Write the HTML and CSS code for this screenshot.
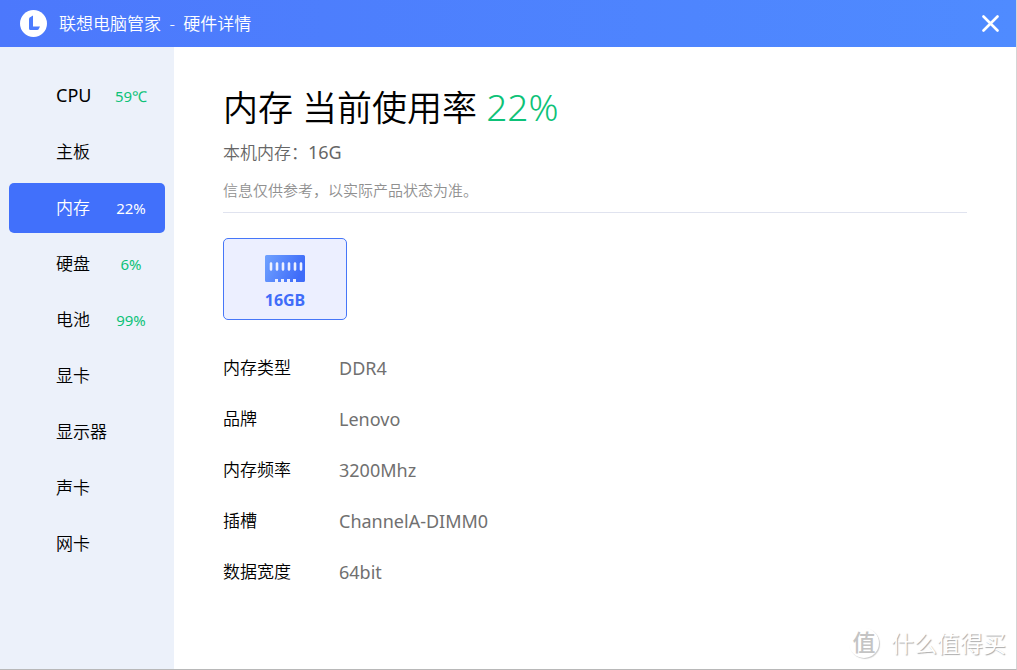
FILE: index.html
```html
<!DOCTYPE html>
<html lang="zh-CN">
<head>
<meta charset="utf-8">
<title>联想电脑管家 - 硬件详情</title>
<link rel="stylesheet" href="styles.css">
</head>
<body>
<div class="window">
  <header class="titlebar">
    <svg class="logo" viewBox="0 0 27 27" aria-hidden="true">
      <circle cx="13.5" cy="13.5" r="13.5" fill="#fff"/>
      <path d="M9 9Q9 7.500 10.500 7L13 5.500V16.500H20L19 18.500Q18.500 20 17 20H10.500Q9 20 9 18.500Z" fill="#4c7cff"/>
    </svg>
    <h1 class="app-title">联想电脑管家<span class="dash"> - </span>硬件详情</h1>
    <button class="close" type="button" aria-label="关闭">
      <svg viewBox="0 0 17 17" aria-hidden="true"><path d="M1.500 1.500L15.500 15.500M15.500 1.500L1.500 15.500" stroke="#fff" stroke-width="2.600" stroke-linecap="round"/></svg>
    </button>
  </header>
  <div class="body">
    <nav class="sidebar">
      <a class="item" href="#cpu"><span class="name"><span class="latin">CPU</span></span><span class="stat">59℃</span></a>
      <a class="item" href="#board"><span class="name">主板</span></a>
      <a class="item active" href="#memory" aria-current="page"><span class="name">内存</span><span class="stat">22%</span></a>
      <a class="item" href="#disk"><span class="name">硬盘</span><span class="stat">6%</span></a>
      <a class="item" href="#battery"><span class="name">电池</span><span class="stat">99%</span></a>
      <a class="item" href="#gpu"><span class="name">显卡</span></a>
      <a class="item" href="#display"><span class="name">显示器</span></a>
      <a class="item" href="#audio"><span class="name">声卡</span></a>
      <a class="item" href="#network"><span class="name">网卡</span></a>
    </nav>
    <main class="content">
      <h2 class="heading">内存 当前使用率 <span class="usage">22%</span></h2>
      <p class="summary">本机内存：<span class="latin">16G</span></p>
      <p class="note">信息仅供参考，以实际产品状态为准。</p>
      <button class="module" type="button">
        <svg class="ram" viewBox="0 0 40 27" aria-hidden="true">
          <defs><linearGradient id="ramFill" x1="0" y1="0" x2="1" y2=".3"><stop offset="0" stop-color="#70a2ff"/><stop offset="1" stop-color="#3f6cf9"/></linearGradient></defs>
          <path d="M1.500 0H38.500Q40 0 40 1.500V25.500Q40 27 38.500 27H31V24H28V27H25V24H22V27H19V24H16V27H13V24H10V27H1.500Q0 27 0 25.500V1.500Q0 0 1.500 0Z" fill="url(#ramFill)"/>
          <path d="M6 8.500V14.500M12 8.500V14.500M18 8.500V14.500M24 8.500V14.500M30 8.500V14.500M36 8.500V14.500" stroke="#ecefff" stroke-width="2.600" stroke-linecap="round"/>
        </svg>
        <span>16GB</span>
      </button>
      <dl class="details">
        <dt>内存类型</dt><dd>DDR4</dd>
        <dt>品牌</dt><dd>Lenovo</dd>
        <dt>内存频率</dt><dd>3200Mhz</dd>
        <dt>插槽</dt><dd>ChannelA-DIMM0</dd>
        <dt>数据宽度</dt><dd>64bit</dd>
      </dl>
    </main>
  </div>
  <div class="watermark"><span class="seal">值</span><span>什么值得买</span></div>
</div>
</body>
</html>
```
FILE: styles.css
```css
* { box-sizing: border-box; }
body {
  margin: 0;
  font-family: "Noto Sans", "Noto Sans CJK SC", sans-serif;
  font-weight: 350;
  color: #000;
}
h1, h2, p, dl, dd { margin: 0; font-weight: inherit; }
button { font-family: inherit; cursor: pointer; }
.latin, .stat, .details dd { font-weight: 400; }
.latin { font-size: 18px; line-height: 20px; }
.window {
  position: relative;
  min-height: 100vh;
  display: flex;
  flex-direction: column;
  background: #fff;
  border-right: 1px solid #d5d5d5;
  border-bottom: 1px solid #b8b8b8;
}
.titlebar {
  height: 47px;
  display: flex;
  align-items: center;
  gap: 12px;
  padding: 0 14px 0 20px;
  background: linear-gradient(90deg, #4c78fc, #4f8bff);
  color: #fff;
}
.logo { width: 27px; height: 27px; }
.app-title { flex: 1; font-size: 17px; line-height: 24px; }
.dash { margin: 0 4px; }
.close {
  display: flex;
  padding: 3px;
  border: 0;
  background: none;
}
.close svg { width: 17px; height: 17px; }
.body { flex: 1; display: flex; }
.sidebar {
  width: 174px;
  display: flex;
  flex-direction: column;
  gap: 6px;
  padding: 24px 9px;
  background: #ecf1fa;
}
.item {
  height: 50px;
  display: flex;
  align-items: center;
  padding: 0 8px 0 47px;
  border-radius: 5px;
  color: #000;
  text-decoration: none;
}
.name { flex: 1; font-size: 17px; line-height: 24px; white-space: nowrap; }
.stat { width: 52px; font-size: 15px; line-height: 24px; text-align: center; color: #0dc278; }
.active { background: #4170fb; }
.active, .active .stat { color: #fff; }
.content { flex: 1; padding: 35px 49px 24px; }
.heading { font-size: 35px; line-height: 52px; }
.usage { color: #0dc278; font-size: 37px; line-height: 40px; }
.summary { margin-top: 7px; font-size: 17px; line-height: 24px; color: #666; }
.note {
  padding: 14px 0 11px;
  border-bottom: 1px solid #e0e3ef;
  font-size: 15px;
  line-height: 22px;
  color: #909090;
}
.module {
  width: 124px;
  height: 82px;
  margin-top: 25px;
  padding: 6px 0 0;
  display: flex;
  flex-direction: column;
  align-items: center;
  justify-content: center;
  gap: 8px;
  border: 1px solid #4676f8;
  border-radius: 5px;
  background: #ecefff;
  color: #3f6cf9;
  font-size: 16px;
  font-weight: 700;
  line-height: 20px;
}
.ram { width: 40px; height: 27px; }
.details {
  margin-top: 36px;
  display: grid;
  grid-template-columns: 116px 1fr;
  row-gap: 27px;
  font-size: 17px;
  line-height: 24px;
}
.details dd { font-size: 18px; color: #707070; }
.watermark {
  position: absolute;
  right: 10px;
  bottom: 10px;
  display: flex;
  align-items: center;
  gap: 10px;
  font-size: 23px;
  line-height: 32px;
  color: #fff;
  text-shadow: 1px 1px 1px #aaa;
}
.seal {
  width: 30px;
  height: 30px;
  margin-right: 2px;
  border-radius: 50%;
  box-shadow: 1px 1px 1px #ccc;
  color: #c4c4c4;
  font-weight: 500;
  line-height: 28px;
  text-align: center;
  text-shadow: none;
}
```
